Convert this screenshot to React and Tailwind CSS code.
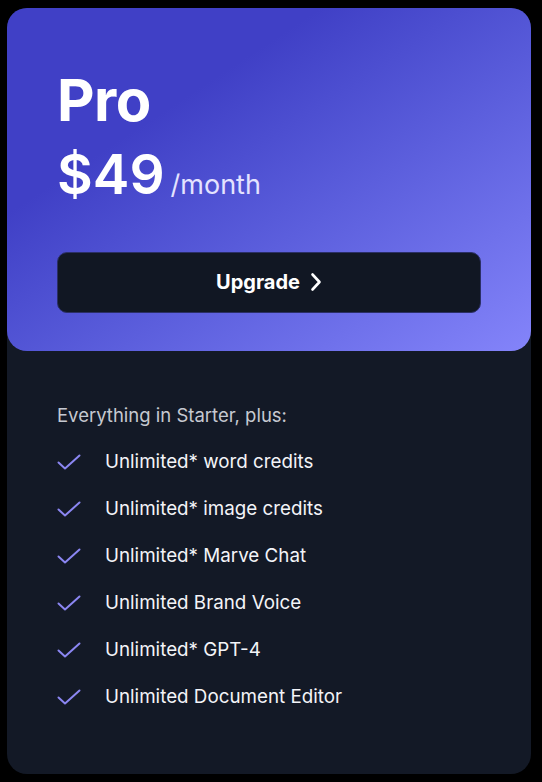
import React from "react";

const features = [
  "Unlimited* word credits",
  "Unlimited* image credits",
  "Unlimited* Marve Chat",
  "Unlimited Brand Voice",
  "Unlimited* GPT-4",
  "Unlimited Document Editor",
];

function Check() {
  return (
    <svg width="24" height="16" viewBox="0 0 24 16" fill="none" className="shrink-0">
      <path d="M1.5 8.5 L8 14.5 L22.5 1.5" stroke="#8b86f2" strokeWidth="2" strokeLinecap="round" strokeLinejoin="round" />
    </svg>
  );
}

export default function App() {
  return (
    <div className="min-h-[782px] bg-black pt-[8px] pl-[7px] font-['Inter',sans-serif]">
      <div className="w-[524px] h-[766px] rounded-[20px] bg-[#131926] flex flex-col">
        {/* header */}
        <div className="h-[343px] rounded-[20px] bg-linear-to-br from-[#4040c6] from-30% to-[#8484fa] px-[50px] pt-[63px]">
          <h2 className="text-[58px] leading-none font-bold text-white tracking-[-0.5px]">Pro</h2>
          <div className="mt-[18px] flex items-baseline gap-[6px]">
            <span className="text-[55px] leading-none font-semibold text-white">$49</span>
            <span className="text-[27px] text-[#e4e3ff]">/month</span>
          </div>
          <button className="mt-[46px] w-full h-[61px] rounded-[10px] bg-[#111723] border border-[#2b2f66] flex items-center justify-center gap-[10px] text-white text-[20px] font-bold">
            Upgrade
            <svg width="12" height="20" viewBox="0 0 12 20" fill="none">
              <path d="M2.5 2.5 L9.5 10 L2.5 17.5" stroke="white" strokeWidth="2.6" strokeLinecap="round" strokeLinejoin="round" />
            </svg>
          </button>
        </div>

        {/* features */}
        <div className="px-[50px] pt-[51px]">
          <p className="text-[18.5px] text-[#c6c9d1]">Everything in Starter, plus:</p>
          <ul className="mt-[19px] flex flex-col gap-[20px]">
            {features.map((f) => (
              <li key={f} className="flex items-center gap-[24px] h-[27px]">
                <Check />
                <span className="text-[18.8px] text-[#f3f4f8]">{f}</span>
              </li>
            ))}
          </ul>
        </div>
      </div>
    </div>
  );
}
